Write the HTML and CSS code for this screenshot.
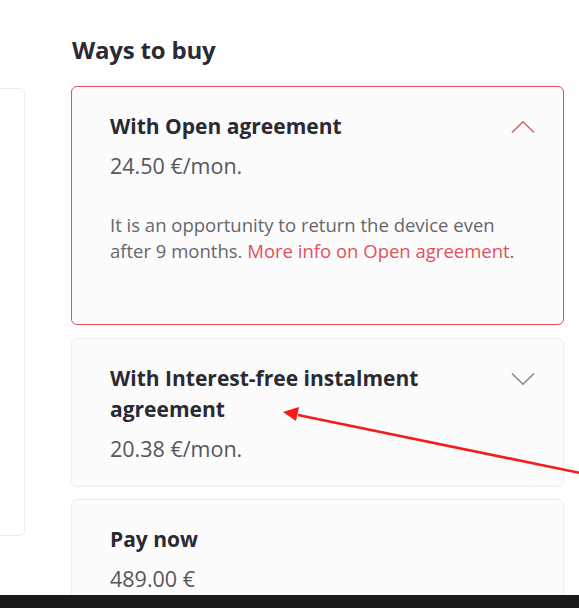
FILE: index.html
```html
<!DOCTYPE html>
<html lang="en">

<head>
 <meta charset="UTF-8">
 <meta name="viewport" content="width=device-width, initial-scale=1.0">
 <title>Ways to buy</title>
 <link rel="stylesheet" href="styles.css">
</head>

<body>
 <div class="page">
  <div class="side"></div>

  <section class="buy">
   <h2>Ways to buy</h2>

   <div class="option active">
    <div class="head">
     <h3>With Open agreement</h3>
     <svg class="chev up" width="24" height="14" viewBox="0 0 24 14"><path d="M1 12.5 L12 1.8 L23 12.5" /></svg>
    </div>
    <p class="price">24.50 €/mon.</p>
    <p class="desc">It is an opportunity to return the device even after 9 months. <a href="#">More info on Open agreement</a>.</p>
   </div>

   <div class="option">
    <div class="head">
     <h3>With Interest-free instalment agreement</h3>
     <svg class="chev" width="24" height="14" viewBox="0 0 24 14"><path d="M1 1.5 L12 12.2 L23 1.5" /></svg>
    </div>
    <p class="price">20.38 €/mon.</p>
   </div>

   <div class="option">
    <div class="head">
     <h3>Pay now</h3>
    </div>
    <p class="price">489.00 €</p>
   </div>
  </section>
 </div>

 <!-- annotation arrow -->
 <svg class="arrow" width="579" height="608" viewBox="0 0 579 608">
  <line x1="298" y1="415" x2="580" y2="473" />
  <polygon points="283,412 299,407 296,421" />
 </svg>

 <div class="taskbar"></div>
</body>

</html>
```

FILE: styles.css
```css
body {
 margin: 0;
 background: #fff;
 font-family: 'Open Sans', 'Noto Sans', sans-serif;
 color: #2b2b33;
 overflow: hidden;
 height: 608px;
}

.page {
 display: flex;
 gap: 46px;
}

.side {
 width: 24px;
 height: 446px;
 margin-top: 88px;
 border: 1px solid #ececec;
 border-left: 0;
 border-radius: 0 5px 5px 0;
 flex-shrink: 0;
}

.buy {
 width: 493px;
 padding-top: 33px;
}

.buy h2 {
 margin: 0 0 0 1px;
 font-size: 24px;
 line-height: 34px;
 font-weight: 700;
 color: #2a2a33;
 letter-spacing: -0.2px;
}

.option {
 background: #fcfcfc;
 border: 1px solid #ededed;
 border-radius: 6px;
 margin-bottom: 12px;
 padding: 24px 28px 24px 38px;
}

.option.active {
 margin-top: 19px;
 margin-bottom: 13px;
 border-color: #e3505b;
 padding-bottom: 60px;
}

.head {
 display: flex;
 justify-content: space-between;
 align-items: flex-start;
}

.head h3 {
 margin: 0;
 max-width: 345px;
 font-size: 21px;
 line-height: 31px;
 font-weight: 700;
 color: #2a2a33;
}

.chev {
 margin-top: 9px;
 flex-shrink: 0;
}

.chev path {
 fill: none;
 stroke: #8a8a8e;
 stroke-width: 1.6;
}

.chev.up path {
 stroke: #e0606e;
}

.price {
 margin: 11px 0 0;
 font-size: 21.5px;
 line-height: 26px;
 color: #55555c;
}

.desc {
 margin: 33px 0 0;
 max-width: 415px;
 font-size: 18.5px;
 line-height: 26px;
 color: #66666c;
}

.desc a {
 color: #e3505b;
 text-decoration: none;
}

.arrow {
 position: absolute;
 left: 0;
 top: 0;
 pointer-events: none;
}

.arrow line {
 stroke: #f51b1b;
 stroke-width: 2.6;
}

.arrow polygon {
 fill: #f51b1b;
}

.taskbar {
 position: fixed;
 left: 0;
 right: 0;
 bottom: 0;
 height: 13px;
 background: #19191b;
}
```
